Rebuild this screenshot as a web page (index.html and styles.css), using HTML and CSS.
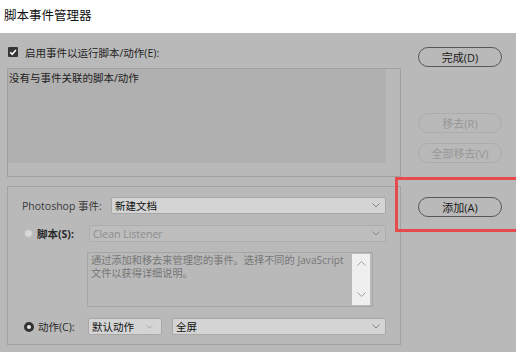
FILE: index.html
```html
<!DOCTYPE html>
<html lang="zh-CN">
<head>
<meta charset="utf-8">
<title>脚本事件管理器</title>
<link rel="stylesheet" href="styles.css">
</head>
<body>
<div class="title">脚本事件管理器</div>
<div class="main">
  <div class="left">
    <div class="check-row">
      <span class="checkbox"><svg width="10" height="10" viewBox="0 0 10 10"><path d="M2.2 5.2 L4.2 7.2 L7.9 2.9" fill="none" stroke="#fff" stroke-width="1.6"/></svg></span>
      <span>启用事件以运行脚本/动作(E):</span>
    </div>
    <div class="list">
      <div class="list-content">没有与事件关联的脚本/动作</div>
      <div class="list-scroll"></div>
      <div class="list-scroll"></div>
      <div class="list-scroll"></div>
    </div>
    <div class="panel">
      <div class="row">
        <span class="lbl-ps">Photoshop 事件:</span>
        <div class="select sel-wide"><span>新建文档</span><svg class="chev" width="8" height="5" viewBox="0 0 8 5"><path d="M0.5 0.5 L4 4 L7.5 0.5" fill="none" stroke="#8a8a8a" stroke-width="1"/></svg></div>
      </div>
      <div class="row row-gap">
        <span class="radio"></span>
        <span class="lbl-script">脚本(S):</span>
        <div class="select sel-disabled sel-wide"><span>Clean Listener</span><svg class="chev" width="8" height="5" viewBox="0 0 8 5"><path d="M0.5 0.5 L4 4 L7.5 0.5" fill="none" stroke="#8a8a8a" stroke-width="1"/></svg></div>
      </div>
      <div class="desc">
        <div class="desc-text">通过添加和移去来管理您的事件。选择不同的 JavaScript<br>文件以获得详细说明。</div>
        <div class="desc-scroll">
          <svg width="9" height="5" viewBox="0 0 9 5"><path d="M0.5 4.5 L4.5 0.5 L8.5 4.5" fill="none" stroke="#a0a0a0" stroke-width="1"/></svg>
          <svg width="9" height="5" viewBox="0 0 9 5"><path d="M0.5 0.5 L4.5 4.5 L8.5 0.5" fill="none" stroke="#a0a0a0" stroke-width="1"/></svg>
        </div>
      </div>
      <div class="row row-gap">
        <span class="radio radio-on"></span>
        <span class="lbl-action">动作(C):</span>
        <div class="select sel-small"><span>默认动作</span><svg class="chev" width="7" height="4" viewBox="0 0 8 5"><path d="M0.5 0.5 L4 4 L7.5 0.5" fill="none" stroke="#9a9a9a" stroke-width="1"/></svg></div>
        <div class="select sel-wide"><span>全屏</span><svg class="chev" width="8" height="5" viewBox="0 0 8 5"><path d="M0.5 0.5 L4 4 L7.5 0.5" fill="none" stroke="#8a8a8a" stroke-width="1"/></svg></div>
      </div>
    </div>
  </div>
  <div class="right">
    <div class="btn">完成(D)</div>
    <div class="btn btn-disabled btn-remove">移去(R)</div>
    <div class="btn btn-disabled btn-removeall">全部移去(V)</div>
    <div class="btn btn-add">添加(A)</div>
  </div>
  <div class="highlight"></div>
</div>
</body>
</html>
```

FILE: styles.css
```css
html, body {
  margin: 0;
  padding: 0;
}
body {
  width: 516px;
  height: 352px;
  overflow: hidden;
  background: #b9b9b9;
  font-family: "Open Sans", "Noto Sans CJK SC", sans-serif;
  font-size: 10.5px;
  color: #222;
}
.title {
  background: #fff;
  height: 33px;
  line-height: 32px;
  padding-left: 4px;
  font-size: 12.5px;
  color: #111;
}
.main {
  position: relative;
  display: flex;
  align-items: flex-start;
  height: 319px;
}
.left {
  margin-left: 7px;
  width: 394px;
  padding-top: 12px;
}
.check-row {
  display: flex;
  align-items: center;
  height: 14px;
  gap: 7px;
  padding-left: 1px;
  color: #1e1e1e;
}
.checkbox {
  width: 10px;
  height: 10px;
  background: #353535;
  border-radius: 1px;
  display: flex;
}
.list {
  margin-top: 9px;
  height: 109px;
  box-sizing: border-box;
  border: 1px solid #a0a0a0;
  display: grid;
  grid-template-columns: 1fr 14px;
  grid-template-rows: 1fr 13px;
}
.list-content {
  background: #b0b0b0;
  padding: 2px 1px;
  line-height: 14px;
  color: #1e1e1e;
}
.list-scroll {
  background: #b9b9b9;
}
.panel {
  margin-top: 9px;
  height: 159px;
  box-sizing: border-box;
  border: 1px solid #a2a2a2;
  padding: 10px 14px 0 14px;
}
.row {
  display: flex;
  align-items: center;
  height: 17px;
}
.row-gap {
  margin-top: 11px;
}
.lbl-ps {
  width: 89px;
  flex: none;
  color: #3a3a3a;
}
.select {
  height: 17px;
  box-sizing: border-box;
  border: 1px solid #a8a8a8;
  border-radius: 2px;
  background: #d4d4d4;
  display: flex;
  align-items: center;
  justify-content: space-between;
  padding: 0 5px 0 3px;
  color: #111;
}
.sel-wide {
  flex: 1;
}
.sel-disabled {
  background: #bdbdbd;
  color: #8c8c8c;
  border-color: #adadad;
}
.sel-small {
  width: 74px;
  flex: none;
  margin-right: 10px;
  padding-right: 8px;
}
.chev {
  flex: none;
}
.radio {
  width: 9px;
  height: 9px;
  box-sizing: border-box;
  border-radius: 50%;
  background: #d8d8d8;
  border: 1px solid #bcbcbc;
  margin-left: 2px;
  flex: none;
}
.radio-on {
  width: 10px;
  height: 10px;
  background: #e6e6e6;
  border: 3px solid #333;
}
.lbl-script {
  width: 52px;
  margin-left: 4px;
  flex: none;
  font-weight: bold;
  color: #2a2a2a;
}
.lbl-action {
  width: 50px;
  margin-left: 4px;
  flex: none;
  color: #2a2a2a;
}
.desc {
  margin-top: 10px;
  margin-left: 65px;
  width: 286px;
  height: 55px;
  box-sizing: border-box;
  border: 1px solid #a6a6a6;
  display: flex;
  padding: 1px 2px 1px 2px;
}
.desc-text {
  flex: 1;
  white-space: nowrap;
  overflow: hidden;
  line-height: 13px;
  font-size: 10.2px;
  color: #767676;
  padding-left: 1px;
}
.desc-scroll {
  width: 18px;
  flex: none;
  background: #efefef;
  display: flex;
  flex-direction: column;
  align-items: center;
  justify-content: space-between;
  padding: 7px 0 8px 0;
  box-sizing: border-box;
}
.right {
  margin-left: 17px;
  padding-top: 14px;
  width: 84px;
  display: flex;
  flex-direction: column;
}
.btn {
  width: 84px;
  height: 20px;
  box-sizing: border-box;
  border: 1px solid #575757;
  border-radius: 10px;
  display: flex;
  align-items: center;
  justify-content: center;
  font-size: 11px;
  color: #1a1a1a;
}
.btn-disabled {
  border-color: #acacac;
  color: #979797;
}
.btn-remove {
  margin-top: 46px;
}
.btn-removeall {
  margin-top: 10px;
}
.btn-add {
  margin-top: 34px;
}
.highlight {
  position: absolute;
  left: 395px;
  top: 144px;
  width: 140px;
  height: 55px;
  box-sizing: border-box;
  border: 3px solid #e64a4c;
}
```
